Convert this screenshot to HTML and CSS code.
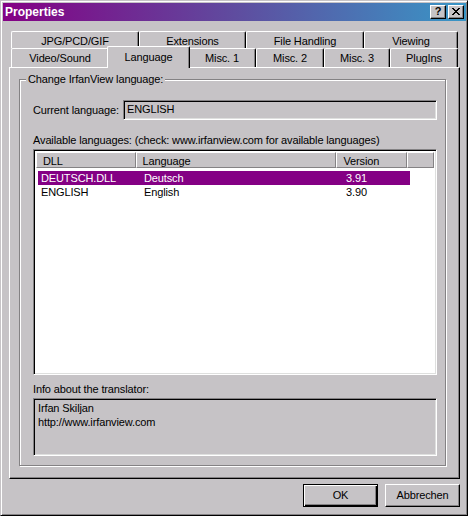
FILE: index.html
```html
<!DOCTYPE html>
<html>
<head>
<meta charset="utf-8">
<title>Properties</title>
<link rel="stylesheet" href="styles.css">
</head>
<body>
<div class="window">
  <div class="titlebar">
    <span class="title">Properties</span>
    <div class="tbtns">
      <div class="tbtn help">?</div>
      <div class="tbtn close">
        <svg width="8" height="7" viewBox="0 0 8 7" shape-rendering="crispEdges">
          <path d="M0 0h2v1h-2zM6 0h2v1h-2zM1 1h2v1h-2zM5 1h2v1h-2zM2 2h4v1h-4zM3 3h2v1h-2zM2 4h4v1h-4zM1 5h2v1h-2zM5 5h2v1h-2zM0 6h2v1h-2zM6 6h2v1h-2z" fill="#000"/>
        </svg>
      </div>
    </div>
  </div>
  <div class="client">
    <div class="tabs">
      <div class="tabrow back">
        <div class="tab t-jpg">JPG/PCD/GIF</div>
        <div class="tab t-ext">Extensions</div>
        <div class="tab t-file">File Handling</div>
        <div class="tab t-view">Viewing</div>
      </div>
      <div class="tabrow front">
        <div class="tab t-video">Video/Sound</div>
        <div class="tab t-lang sel">Language</div>
        <div class="tab t-m1">Misc. 1</div>
        <div class="tab t-m2">Misc. 2</div>
        <div class="tab t-m3">Misc. 3</div>
        <div class="tab t-plug">PlugIns</div>
      </div>
    </div>
    <div class="panel">
      <div class="group">
        <div class="group-label">Change IrfanView language:</div>
        <div class="current-row">
          <span class="field-label">Current language:</span>
          <div class="edit current">ENGLISH</div>
        </div>
        <div class="avail-label">Available languages: (check: www.irfanview.com for available languages)</div>
        <div class="listbox">
          <div class="lv-header">
            <div class="hcell c-dll">DLL</div>
            <div class="hcell c-lang">Language</div>
            <div class="hcell c-ver">Version</div>
            <div class="hcell c-fill"></div>
          </div>
          <div class="lv-rows">
            <div class="lv-row selected"><span>DEUTSCH.DLL</span><span>Deutsch</span><span>3.91</span></div>
            <div class="lv-row"><span>ENGLISH</span><span>English</span><span>3.90</span></div>
          </div>
        </div>
        <div class="info-label">Info about the translator:</div>
        <div class="edit info">Irfan Skiljan<br>http://www.irfanview.com</div>
      </div>
    </div>
    <div class="buttons">
      <div class="btn default">OK</div>
      <div class="btn">Abbrechen</div>
    </div>
  </div>
</div>
</body>
</html>
```
FILE: styles.css
```css
* { box-sizing: border-box; margin: 0; padding: 0; }
html, body { width: 468px; height: 516px; overflow: hidden; }
body {
  font-family: "Liberation Sans", Arial, sans-serif;
  font-size: 11px;
  letter-spacing: -0.13px;
  color: #000;
  background: #c6c3c6;
}
.window {
  width: 468px;
  height: 516px;
  background: #c6c3c6;
  border: 1px solid;
  border-color: #c6c3c6 #000 #000 #c6c3c6;
  box-shadow: inset 1px 1px 0 #fff, inset -1px -1px 0 #848284;
  padding: 2px 1px 1px 2px;
  display: flex;
  flex-direction: column;
}
.titlebar {
  height: 18px;
  display: flex;
  align-items: center;
  padding: 0 2px;
  background: linear-gradient(90deg, #840084 0%, #5f4c9f 50%, #3996c6 100%);
}
.title {
  flex: 1;
  color: #fff;
  font-weight: bold;
  font-size: 12px;
  letter-spacing: 0;
  line-height: 14px;
}
.tbtns { display: flex; gap: 2px; }
.tbtn {
  width: 16px;
  height: 14px;
  background: #c6c3c6;
  border: 1px solid;
  border-color: #fff #000 #000 #fff;
  box-shadow: inset -1px -1px 0 #848284;
  display: flex;
  align-items: center;
  justify-content: center;
}
.help {
  font-weight: bold;
  font-size: 11px;
  line-height: 11px;
  letter-spacing: 0;
  padding-bottom: 1px;
}
.close svg { display: block; margin-top: -1px; }

.client {
  flex: 1;
  padding: 10px 6px 0 6px;
  display: flex;
  flex-direction: column;
}
.tabs { margin: 0 2px; display: flex; flex-direction: column; }
.tabrow { display: flex; align-items: flex-start; }
.tab {
  background: #c6c3c6;
  border-top: 1px solid #fff;
  border-left: 1px solid #fff;
  border-right: 1px solid #000;
  box-shadow: inset -1px 0 0 #848284;
  border-radius: 2px 2px 0 0;
  text-align: center;
  white-space: nowrap;
}
.back .tab { height: 17px; padding-top: 3px; line-height: 12px; }
.front .tab { height: 19px; padding-top: 3px; line-height: 13px; }
.front .tab.sel {
  height: 22px;
  padding-top: 4px;
  margin: -2px -2px -1px -2px;
  position: relative;
  z-index: 2;
}
.t-jpg { width: 128px; }
.t-ext { width: 107px; }
.t-file { width: 118px; }
.t-view { width: 94px; }
.t-video { width: 98px; }
.t-lang { width: 83px; }
.t-m1 { width: 68px; }
.t-m2 { width: 68px; }
.t-m3 { width: 66px; }
.t-plug { width: 68px; }

.panel {
  height: 412px;
  border: 1px solid;
  border-color: #fff #000 #000 #fff;
  box-shadow: inset -1px -1px 0 #848284;
  padding: 11px 13px 12px 9px;
  display: flex;
  flex-direction: column;
}
.group {
  flex: 1;
  border: 1px solid #848284;
  box-shadow: inset 1px 1px 0 #fff, 1px 1px 0 #fff;
  padding: 0 8px 9px 13px;
  display: flex;
  flex-direction: column;
}
.group-label {
  align-self: flex-start;
  margin: -7px 0 0 -7px;
  padding: 0 2px;
  background: #c6c3c6;
  line-height: 13px;
}
.current-row {
  display: flex;
  align-items: center;
  height: 20px;
  margin-top: 14px;
  line-height: 13px;
}
.field-label { width: 90px; }
.edit {
  background: #c6c3c6;
  border: 1px solid;
  border-color: #848284 #fff #fff #848284;
  box-shadow: inset 1px 1px 0 #000, inset -1px -1px 0 #dedfde;
}
.edit.current {
  flex: 1;
  height: 20px;
  padding: 0 3px;
  line-height: 16px;
}
.avail-label { margin-top: 14px; line-height: 13px; }
.listbox {
  margin-top: 2px;
  height: 226px;
  background: #fff;
  border: 1px solid;
  border-color: #848284 #fff #fff #848284;
  box-shadow: inset 1px 1px 0 #000, inset -1px -1px 0 #dedfde;
  padding: 2px;
}
.lv-header { display: flex; height: 16px; }
.hcell {
  height: 16px;
  background: #c6c3c6;
  border: 1px solid;
  border-color: #fff #848284 #848284 #fff;
  padding: 2px 0 0 6px;
  line-height: 12px;
}
.c-dll { width: 100px; }
.c-lang { width: 202px; }
.c-ver { width: 71px; }
.c-fill { width: 27px; }
.lv-rows { padding: 3px 0 0 2px; }
.lv-row {
  display: grid;
  grid-template-columns: 98px 202px 72px;
  width: 372px;
  line-height: 14px;
}
.lv-row span:nth-child(1) { padding-left: 3px; }
.lv-row span:nth-child(2) { padding-left: 8px; }
.lv-row span:nth-child(3) { padding-left: 8px; }
.lv-row.selected { background: #840084; color: #fff; }
.info-label { margin-top: 8px; line-height: 13px; }
.edit.info {
  margin-top: 2px;
  flex: 1;
  padding: 2px 4px 0 4px;
  line-height: 14px;
}

.buttons {
  display: flex;
  justify-content: flex-end;
  gap: 7px;
  margin-top: 5px;
}
.btn {
  width: 75px;
  height: 23px;
  display: flex;
  align-items: center;
  justify-content: center;
  line-height: 13px;
  background: #c6c3c6;
  border: 1px solid;
  border-color: #fff #000 #000 #fff;
  box-shadow: inset -1px -1px 0 #848284;
}
.btn.default {
  border-color: #000;
  box-shadow: inset 1px 1px 0 #fff, inset -1px -1px 0 #000, inset -2px -2px 0 #848284;
}
```
